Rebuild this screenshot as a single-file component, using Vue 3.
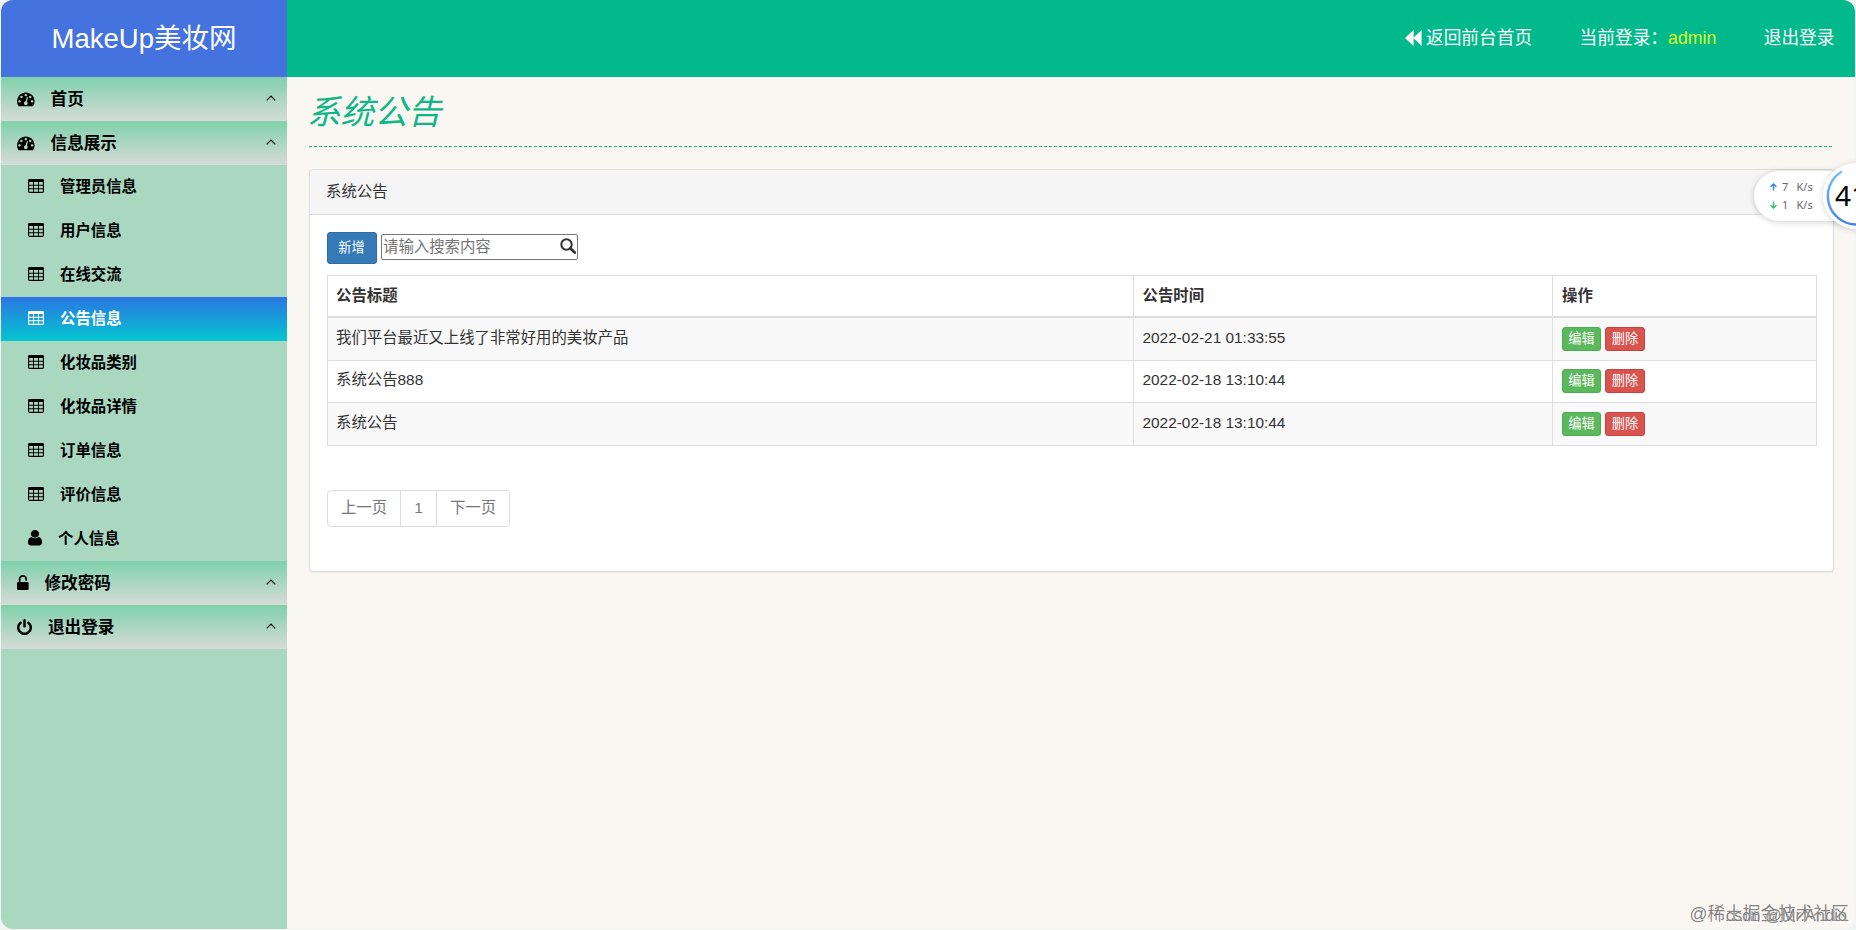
<script setup>
const tachometer = 'M384 1152q0-53-37.5-90.5t-90.5-37.5-90.5 37.5-37.5 90.5 37.5 90.5 90.5 37.5 90.5-37.5 37.5-90.5zm192-448q0-53-37.5-90.5t-90.5-37.5-90.5 37.5-37.5 90.5 37.5 90.5 90.5 37.5 90.5-37.5 37.5-90.5zm428 481l101-382q6-26-7.5-48.5t-38.5-29.5-48 6.5-30 39.5l-101 382q-60 5-107 43.5t-63 98.5q-20 77 20 146t117 89 146-20 89-117q16-60-6-117t-72-91zm660-33q0-53-37.5-90.5t-90.5-37.5-90.5 37.5-37.5 90.5 37.5 90.5 90.5 37.5 90.5-37.5 37.5-90.5zm-640-640q0-53-37.5-90.5t-90.5-37.5-90.5 37.5-37.5 90.5 37.5 90.5 90.5 37.5 90.5-37.5 37.5-90.5zm448 192q0-53-37.5-90.5t-90.5-37.5-90.5 37.5-37.5 90.5 37.5 90.5 90.5 37.5 90.5-37.5 37.5-90.5zm320 448q0 261-141 483-19 29-54 29h-1402q-35 0-54-29-141-221-141-483 0-182 71-348t191-286 286-191 348-71 348 71 286 191 191 286 71 348z'
const userPath = 'M1536 1399q0 109-62.5 187t-150.5 78h-854q-88 0-150.5-78t-62.5-187q0-85 8.5-160.5t31.5-152 58.5-131 94-89 134.5-34.5q131 128 313 128t313-128q76 0 134.5 34.5t94 89 58.5 131 31.5 152 8.5 160.5zm-256-887q0 159-112.5 271.5t-271.5 112.5-271.5-112.5-112.5-271.5 112.5-271.5 271.5-112.5 271.5 112.5 112.5 271.5z'
const powerPath = 'M1664 896q0 156-61 298t-164 245-245 164-298 61-298-61-245-164-164-245-61-298q0-182 80.5-343t226.5-270q43-32 95.5-25t83.5 50q32 42 24.5 94.5t-49.5 84.5q-98 74-151.5 181t-53.5 228q0 104 40.5 198.5t109.5 163.5 163.5 109.5 198.5 40.5 198.5-40.5 163.5-109.5 109.5-163.5 40.5-198.5q0-121-53.5-228t-151.5-181q-42-32-49.5-84.5t24.5-94.5q31-43 84-50t95 25q146 109 226.5 270t80.5 343zm-640-768v640q0 52-38 90t-90 38-90-38-38-90v-640q0-52 38-90t90-38 90 38 38 90z'
const menu = [
  { text: '首页', icon: 'dash', group: true },
  { text: '信息展示', icon: 'dash', group: true },
  { text: '管理员信息', icon: 'table' },
  { text: '用户信息', icon: 'table' },
  { text: '在线交流', icon: 'table' },
  { text: '公告信息', icon: 'table', active: true },
  { text: '化妆品类别', icon: 'table' },
  { text: '化妆品详情', icon: 'table' },
  { text: '订单信息', icon: 'table' },
  { text: '评价信息', icon: 'table' },
  { text: '个人信息', icon: 'user' },
  { text: '修改密码', icon: 'unlock', group: true },
  { text: '退出登录', icon: 'power', group: true },
]
const rows = [
  { title: '我们平台最近又上线了非常好用的美妆产品', time: '2022-02-21 01:33:55' },
  { title: '系统公告888', time: '2022-02-18 13:10:44' },
  { title: '系统公告', time: '2022-02-18 13:10:44' },
]
</script>

<template>
  <div class="window">
    <div class="app">
      <aside class="sidebar">
        <div class="brand">MakeUp美妆网</div>
        <nav>
          <a v-for="m in menu" :key="m.text + m.icon" :class="['item', m.group ? 'group' : 'sub', 'i-' + m.icon, { active: m.active }]">
            <svg v-if="m.icon === 'dash'" class="icon" width="17.6" height="17.6" viewBox="0 0 1792 1792"><path :d="tachometer" fill="currentColor" /></svg>
            <svg v-else-if="m.icon === 'table'" class="icon" width="16" height="14" viewBox="0 0 16 14">
              <path fill="currentColor" fill-rule="evenodd" d="M1.4 0H14.6Q16 0 16 1.4V12.6Q16 14 14.6 14H1.4Q0 14 0 12.6V1.4Q0 0 1.4 0ZM1.2 3V5.7H5V3ZM6 3V5.7H10V3ZM11 3V5.7H14.8V3ZM1.2 6.8V9.2H5V6.8ZM6 6.8V9.2H10V6.8ZM11 6.8V9.2H14.8V6.8ZM1.2 10.3V12.8H5V10.3ZM6 10.3V12.8H10V10.3ZM11 10.3V12.8H14.8V10.3Z" />
            </svg>
            <svg v-else-if="m.icon === 'user'" class="icon" width="14" height="15.4" viewBox="256 128 1280 1536" preserveAspectRatio="none"><path :d="userPath" fill="currentColor" /></svg>
            <svg v-else-if="m.icon === 'unlock'" class="icon" width="12" height="15" viewBox="0 0 12 15">
              <path d="M2.6 8V4.2a3.3 3.3 0 0 1 6.6 0V5" fill="none" stroke="currentColor" stroke-width="1.7" stroke-linecap="round" />
              <rect y="7" width="11.6" height="8" rx="1" fill="currentColor" />
            </svg>
            <svg v-else class="icon" width="15" height="16" viewBox="128 0 1536 1664" preserveAspectRatio="none"><path :d="powerPath" fill="currentColor" /></svg>
            <span class="label">{{ m.text }}</span>
            <svg v-if="m.group" class="caret" width="10" height="6" viewBox="0 0 10 6"><path d="M.7 5.3 5 1 9.3 5.3" fill="none" stroke="currentColor" stroke-width="1.2" /></svg>
          </a>
        </nav>
      </aside>

      <div class="right">
        <header class="topbar">
          <a class="back">
            <svg width="17" height="16" viewBox="0 0 17 16"><path d="M8.6 0V16L0 8ZM16.6 0V16L8.3 8Z" fill="currentColor" /></svg>
            <span>返回前台首页</span>
          </a>
          <span class="who">当前登录：<b>admin</b></span>
          <a>退出登录</a>
        </header>

        <main>
          <h1>系统公告</h1>
          <svg class="rule" width="1525" height="1"><line x1="0" y1=".5" x2="1525" y2=".5" stroke="#1fb279" stroke-dasharray="3 2" /></svg>
          <section class="panel">
            <div class="heading">系统公告</div>
            <div class="body">
              <div class="tools">
                <button class="add">新增</button>
                <div class="search">
                  <span>请输入搜索内容</span>
                  <svg width="16" height="16" viewBox="0 0 16 16"><circle cx="6.5" cy="6.5" r="5.2" fill="none" stroke="#333" stroke-width="2" /><path d="M10.3 10.3 14.7 14.5" stroke="#333" stroke-width="2.8" stroke-linecap="round" /></svg>
                </div>
              </div>
              <table>
                <colgroup><col class="c1" /><col class="c2" /><col class="c3" /></colgroup>
                <thead><tr><th>公告标题</th><th>公告时间</th><th>操作</th></tr></thead>
                <tbody>
                  <tr v-for="r in rows" :key="r.title">
                    <td>{{ r.title }}</td>
                    <td>{{ r.time }}</td>
                    <td><div class="ops"><button class="edit">编辑</button><button class="del">删除</button></div></td>
                  </tr>
                </tbody>
              </table>
              <div class="pager"><a class="prev">上一页</a><a class="num">1</a><a class="next">下一页</a></div>
            </div>
          </section>
        </main>
      </div>
    </div>

    <div class="speed">
      <div><svg width="7" height="8" viewBox="0 0 7 8"><path d="M3.5 7.6V1M.6 3.8 3.5 1 6.4 3.8" fill="none" stroke="#2f86e0" stroke-width="1.4" /></svg><i>7</i><span>K/s</span></div>
      <div><svg width="7" height="8" viewBox="0 0 7 8"><path d="M3.5.4V7M.6 4.2 3.5 7 6.4 4.2" fill="none" stroke="#38bd6c" stroke-width="1.4" /></svg><i>1</i><span>K/s</span></div>
    </div>
    <div class="gauge">
      <svg width="66" height="66" viewBox="0 0 66 66">
        <defs><linearGradient id="ring" x1="0" y1="0" x2="0" y2="1"><stop offset="0" stop-color="#6cc0f7" /><stop offset="1" stop-color="#447fee" /></linearGradient></defs>
        <path d="M18 9A28.5 28.5 0 0 0 33 61.5" fill="none" stroke="url(#ring)" stroke-width="2.4" stroke-linecap="round" />
      </svg>
      <span>41</span>
    </div>
    <div class="mark site">@稀土掘金技术社区</div>
    <div class="mark author">csdn @Mr.Andio</div>
  </div>
</template>

<style>
body { background: #f1f5f3; }
</style>

<style scoped>
* { box-sizing: border-box; }
.window {
  position: relative; width: 1856px; height: 930px; overflow: hidden;
  font: 15.4px/22px "Liberation Sans", "Noto Sans CJK SC", sans-serif; color: #333;
}
.app { display: flex; height: 929px; margin: 0 1px; border-radius: 12px; overflow: hidden; background: #faf7f2; }
.sidebar { width: 286px; flex: none; background: #a9d7c0; }
.brand { height: 77px; padding-top: 1px; background: #4472df; color: #fff; font-size: 27.5px; line-height: 76px; text-align: center; }
.item { display: flex; align-items: center; height: 44px; color: #000; font-weight: bold; white-space: nowrap; }
.group { padding: 0 11px 0 16px; font-size: 16.6px; background: linear-gradient(#7fd1ab, #d6dbd7); }
.group .label { padding-top: 2px; }
.sub { padding-left: 27px; font-size: 15.4px; }
.icon { flex: none; position: relative; }
.i-dash .label { margin-left: 16px; }
.i-table .label { margin-left: 16px; }
.i-table .icon { top: -1px; }
.i-user .icon { top: -1px; }
.i-user .label { margin-left: 16px; }
.i-unlock .icon { top: -1px; }
.i-unlock .label { margin-left: 15.5px; }
.i-power .label { margin-left: 16px; }
.caret { margin-left: auto; position: relative; top: -1px; }
.active { color: #fff; background: linear-gradient(#2a76e2, #04c6cf); }
.right { flex: 1; min-width: 0; }
.topbar { display: flex; justify-content: flex-end; align-items: center; height: 77px; padding: 0 20.5px 2px 0; background: #02b98b; color: #fff; font-size: 17.7px; gap: 47.5px; }
.back { display: flex; align-items: center; gap: 3.5px; }
.who b { color: #d7fd22; font-weight: normal; }
main { padding: 13px 21px 0 22px; }
h1 { margin: 0 0 0 -2px; height: 56px; font-size: 33.6px; line-height: 46px; font-style: italic; font-weight: normal; color: #10b686; }
.rule { display: block; }
.panel { margin-top: 22px; height: 403px; background: #fff; border: 1px solid #ddd; border-radius: 4px; box-shadow: 0 1px 1px rgba(0, 0, 0, .06); }
.heading { height: 45px; padding: 0 16px; line-height: 44px; background: #f5f5f5; border-bottom: 1px solid #ddd; border-radius: 3px 3px 0 0; }
.body { padding: 17px 16px 0 17px; }
.tools { display: flex; align-items: center; gap: 4px; height: 32px; }
button { display: block; padding: 0; font: 13.2px/18px "Liberation Sans", "Noto Sans CJK SC", sans-serif; color: #fff; border: 1px solid; border-radius: 3px; }
.add { width: 50px; height: 32px; padding-right: 1px; background: #337ab7; border-color: #2e6da4; }
.search { display: flex; align-items: center; justify-content: space-between; width: 197px; height: 26px; margin-top: -2px; padding: 0 1px; border: 1px solid #767676; border-radius: 2px; color: #757575; line-height: 22px; }
.search svg { position: relative; top: -1px; }
table { width: 1489px; margin-top: 11px; border-collapse: collapse; table-layout: fixed; }
.c1 { width: 806px; } .c2 { width: 419px; } .c3 { width: 264px; }
th, td { height: 42.5px; padding: 0 8px 2px; text-align: left; border: 1px solid #ddd; }
td:nth-child(2), th:nth-child(2) { padding-left: 8.5px; }
th { height: 41px; padding-bottom: 0; border-bottom-width: 2px; }
tbody tr:first-child td { height: 43.5px; }
tbody tr:nth-child(odd) { background: #f9f9f9; }
.ops { display: flex; gap: 4px; padding-top: 2px; }
.edit { width: 39px; height: 24px; background: #5cb85c; border-color: #4cae4c; }
.del { width: 40px; height: 24px; background: #d9534f; border-color: #c9423e; }
td:last-child, th:last-child { padding-left: 9px; }
.pager { display: flex; width: 183px; height: 37px; margin-top: 44px; border: 1px solid #ddd; border-radius: 4px; color: #777; line-height: 34px; text-align: center; }
.prev { width: 73px; border-right: 1px solid #ddd; }
.num { width: 36px; border-right: 1px solid #ddd; }
.next { flex: 1; }
.speed { position: absolute; left: 1754px; top: 171px; width: 120px; height: 50px; padding: 7px 0 0 16px; border-radius: 25px; background: #fff; box-shadow: 0 1px 6px rgba(0, 0, 0, .2); font: 11px/18px "Noto Sans", sans-serif; color: #666; }
.speed div { display: flex; align-items: center; }
.speed i { width: 14.5px; margin-left: 5px; font-style: normal; }
.gauge { position: absolute; left: 1823px; top: 163px; width: 66px; height: 66px; border-radius: 50%; background: #fff; box-shadow: 0 1px 6px rgba(0, 0, 0, .16); }
.gauge svg { display: block; }
.gauge span { position: absolute; left: 12px; top: 13px; font: 28px/38px "Noto Sans", sans-serif; color: #000; }
.mark { position: absolute; white-space: nowrap; color: rgba(90, 90, 90, .75); text-shadow: 0 0 1px #fff; }
.site { right: 7px; top: 902px; font-size: 17.7px; line-height: 24px; }
.author { right: 9px; top: 903px; font-size: 16.5px; line-height: 24px; }
</style>
